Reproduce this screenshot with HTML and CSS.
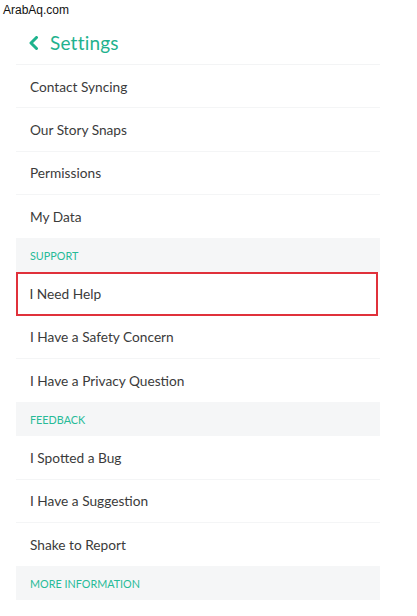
FILE: index.html
```html
<!DOCTYPE html>
<html>
<head>
<meta charset="utf-8">
<link rel="stylesheet" href="styles.css">
</head>
<body>
<div class="watermark">ArabAq.com</div>
<div class="panel">
  <div class="header">
    <svg class="back" width="11" height="14" viewBox="0 0 11 14"><path d="M8.5 1.5 L3 7 L8.5 12.5" fill="none" stroke="#1db38d" stroke-width="3" stroke-linecap="round" stroke-linejoin="round"/></svg>
    <span class="title">Settings</span>
  </div>
  <div class="row">Contact Syncing</div>
  <div class="row">Our Story Snaps</div>
  <div class="row">Permissions</div>
  <div class="row last">My Data</div>
  <div class="section">SUPPORT</div>
  <div class="row highlight">I Need Help</div>
  <div class="row">I Have a Safety Concern</div>
  <div class="row last">I Have a Privacy Question</div>
  <div class="section">FEEDBACK</div>
  <div class="row">I Spotted a Bug</div>
  <div class="row">I Have a Suggestion</div>
  <div class="row last">Shake to Report</div>
  <div class="section">MORE INFORMATION</div>
</div>
</body>
</html>
```
FILE: styles.css
```css
html, body {
  margin: 0;
  padding: 0;
  background: #ffffff;
}
body {
  width: 417px;
  height: 616px;
  overflow: hidden;
}
.watermark {
  font-family: "Liberation Sans", Arial, sans-serif;
  font-size: 12px;
  color: #111;
  height: 20px;
  line-height: 20px;
  padding-left: 3px;
}
.panel {
  margin-left: 16px;
  width: 364px;
  font-family: Lato, "Open Sans", sans-serif;
}
.header {
  height: 44px;
  border-bottom: 1px solid #f3f4f5;
  display: flex;
  align-items: center;
  padding-left: 12px;
  gap: 11px;
  box-sizing: content-box;
}
.back {
  display: block;
  margin-top: 1px;
}
.title {
  font-size: 19px;
  color: #1fb28e;
  letter-spacing: 0.2px;
}
.row {
  box-sizing: border-box;
  height: 43.33px;
  border-bottom: 1px solid #f4f5f6;
  display: flex;
  align-items: center;
  padding-left: 14px;
  font-size: 13.7px;
  color: #3b3b3b;
}
.row.last {
  border-bottom: none;
}
.row.highlight {
  border: 2.5px solid #e0313b;
  margin-right: 2px;
  padding-left: 11.5px;
}
.section {
  height: 34px;
  background: #f5f6f7;
  display: flex;
  align-items: center;
  padding-left: 14px;
  font-size: 10.8px;
  color: #27bb97;
}
```
